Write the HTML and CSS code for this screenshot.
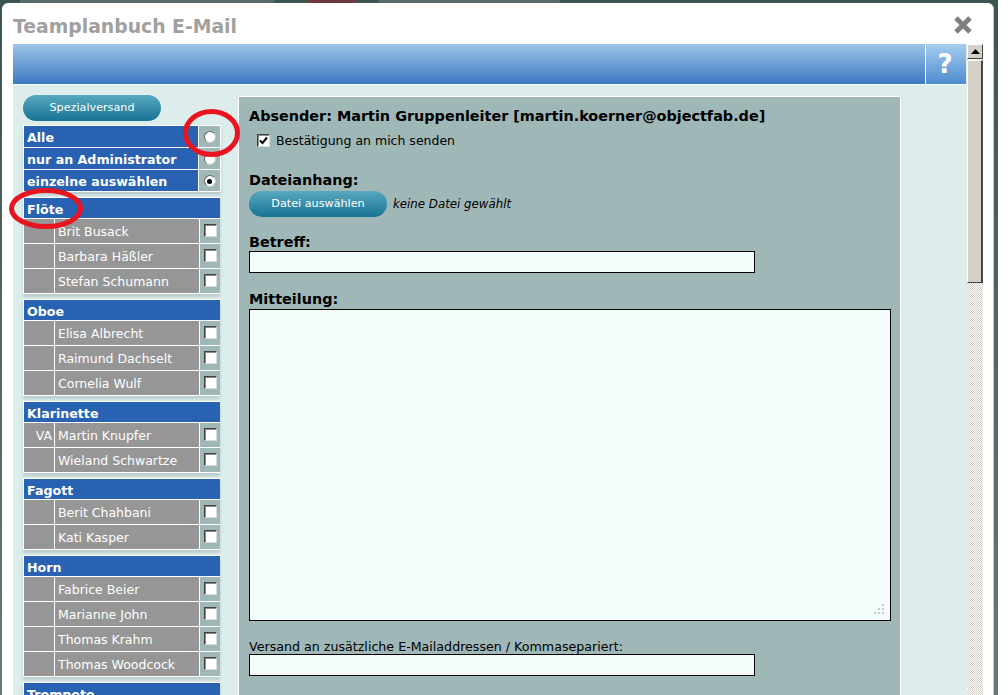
FILE: index.html
```html
<!DOCTYPE html>
<html lang="de">
<head>
<meta charset="utf-8">
<title>Teamplanbuch E-Mail</title>
<link rel="stylesheet" href="styles.css">
</head>
<body>
<div class="page">
  <div class="modal">
    <div class="titlebar">
      <h1 class="title">Teamplanbuch E-Mail</h1>
      <svg class="close" width="20" height="18" viewBox="0 0 20 18"><path d="M3 2 L17 16 M17 2 L3 16" stroke="#808080" stroke-width="5" fill="none"/></svg>
    </div>
    <div class="frame">
      <div class="viewport">
        <div class="band"><div class="help">?</div></div>
        <div class="content">
          <div class="side">
            <div class="btn side-btn">Spezialversand</div>
            <div class="group options">
              <div class="opt"><div class="opt-label">Alle</div><div class="opt-ctl"><span class="radio"></span></div></div>
              <div class="opt"><div class="opt-label">nur an Administrator</div><div class="opt-ctl"><span class="radio"></span></div></div>
              <div class="opt"><div class="opt-label">einzelne auswählen</div><div class="opt-ctl"><span class="radio on"></span></div></div>
            </div>
            <div class="group">
              <div class="ghead">Flöte</div>
              <div class="row"><div class="tag"></div><div class="name">Brit Busack</div><div class="ctl"><span class="cb"></span></div></div>
              <div class="row"><div class="tag"></div><div class="name">Barbara Häßler</div><div class="ctl"><span class="cb"></span></div></div>
              <div class="row"><div class="tag"></div><div class="name">Stefan Schumann</div><div class="ctl"><span class="cb"></span></div></div>
            </div>
            <div class="group">
              <div class="ghead">Oboe</div>
              <div class="row"><div class="tag"></div><div class="name">Elisa Albrecht</div><div class="ctl"><span class="cb"></span></div></div>
              <div class="row"><div class="tag"></div><div class="name">Raimund Dachselt</div><div class="ctl"><span class="cb"></span></div></div>
              <div class="row"><div class="tag"></div><div class="name">Cornelia Wulf</div><div class="ctl"><span class="cb"></span></div></div>
            </div>
            <div class="group">
              <div class="ghead">Klarinette</div>
              <div class="row"><div class="tag">VA</div><div class="name">Martin Knupfer</div><div class="ctl"><span class="cb"></span></div></div>
              <div class="row"><div class="tag"></div><div class="name">Wieland Schwartze</div><div class="ctl"><span class="cb"></span></div></div>
            </div>
            <div class="group">
              <div class="ghead">Fagott</div>
              <div class="row"><div class="tag"></div><div class="name">Berit Chahbani</div><div class="ctl"><span class="cb"></span></div></div>
              <div class="row"><div class="tag"></div><div class="name">Kati Kasper</div><div class="ctl"><span class="cb"></span></div></div>
            </div>
            <div class="group">
              <div class="ghead">Horn</div>
              <div class="row"><div class="tag"></div><div class="name">Fabrice Beier</div><div class="ctl"><span class="cb"></span></div></div>
              <div class="row"><div class="tag"></div><div class="name">Marianne John</div><div class="ctl"><span class="cb"></span></div></div>
              <div class="row"><div class="tag"></div><div class="name">Thomas Krahm</div><div class="ctl"><span class="cb"></span></div></div>
              <div class="row"><div class="tag"></div><div class="name">Thomas Woodcock</div><div class="ctl"><span class="cb"></span></div></div>
            </div>
            <div class="group">
              <div class="ghead">Trompete</div>
            </div>
          </div>
          <div class="panel">
            <div class="sender">Absender: Martin Gruppenleiter [martin.koerner@objectfab.de]</div>
            <div class="confirm"><span class="cb checked"><svg width="9" height="9" viewBox="0 0 9 9"><path d="M1 4.5 L3.5 7 L8 1.5" stroke="#000" stroke-width="2" fill="none"/></svg></span><span>Bestätigung an mich senden</span></div>
            <div class="label label-file">Dateianhang:</div>
            <div class="file"><div class="btn file-btn">Datei auswählen</div><em class="nofile">keine Datei gewählt</em></div>
            <div class="label label-subject">Betreff:</div>
            <div class="input"></div>
            <div class="label label-msg">Mitteilung:</div>
            <div class="textarea"><svg class="grip" width="11" height="11" viewBox="0 0 11 11"><path d="M8 0h2v2H8zM4 4h2v2H4zM8 4h2v2H8zM0 8h2v2H0zM4 8h2v2H4zM8 8h2v2H8z" fill="#c4cccc"/></svg></div>
            <div class="extra">Versand an zusätzliche E-Mailaddressen / Kommasepariert:</div>
            <div class="input"></div>
          </div>
        </div>
      </div>
      <div class="scrollbar">
        <div class="arrow"><svg width="9" height="5" viewBox="0 0 9 5"><path d="M4.5 0 L9 5 H0 Z" fill="#000"/></svg></div>
        <div class="thumb"></div>
        <div class="track"></div>
      </div>
    </div>
  </div>
</div>
<svg class="marks" width="260" height="240" viewBox="0 0 260 240">
  <ellipse cx="211.5" cy="133" rx="26" ry="21.5" fill="none" stroke="#e8141f" stroke-width="5"/>
  <ellipse cx="46" cy="208.5" rx="34.5" ry="18" fill="none" stroke="#e8141f" stroke-width="5"/>
</svg>
</body>
</html>
```
FILE: styles.css
```css
* { box-sizing: border-box; }
html, body { margin: 0; height: 695px; overflow: hidden; background: #fff; }
body { font-family: "DejaVu Sans", Verdana, sans-serif; font-size: 12.5px; position: relative; }
.page {
  width: 998px; height: 695px; padding: 3px 4px 0 2px; overflow: hidden;
  background:
    linear-gradient(90deg, transparent 20px, #566968 20px, #566968 275px, transparent 275px, transparent 308px, #6e3a40 308px, #6e3a40 356px, transparent 356px, transparent 378px, #566968 378px, #566968 560px, transparent 560px) 0 0 / 100% 3px no-repeat,
    linear-gradient(#3d5352, #6a7776);
}
.modal { height: 692px; background: #fff; border-radius: 6px 6px 0 0; padding-left: 11px; border-right: 1px solid #c8cccc; overflow: hidden; }
.titlebar { height: 41px; display: flex; justify-content: space-between; align-items: flex-start; padding: 13px 20px 0 0; }
.title { margin: 0; font-size: 18.8px; line-height: 22px; font-weight: bold; color: #a0a0a0; }
.frame { display: flex; height: 651px; }
.viewport { width: 954px; flex: none; overflow: hidden; background: #dcedec; }
.band { height: 40px; margin: 0 1px 1px 0; display: flex; justify-content: flex-end; background: linear-gradient(#9cc5e8, #3a78c2); box-shadow: 0 1px 0 #fff; }
.help { width: 41px; border-left: 1px solid #fff; background: linear-gradient(#a6cdee, #4d8ccf); color: #fff; font-size: 26px; font-weight: bold; line-height: 40px; text-align: center; padding-right: 2px; }
.content { display: flex; align-items: flex-start; padding: 10px 0 0 10px; }
.side { width: 198px; flex: none; }
.btn { border-radius: 13px; height: 26px; line-height: 25px; text-align: center; color: #fff; font-size: 11.2px; background: linear-gradient(#58a8bf, #177394); }
.side-btn { width: 138px; margin-bottom: 4px; }
.group { border: solid #fff; border-width: 1px 0 0 1px; margin-bottom: 5px; width: 197px; box-shadow: 0 3px 3px #b9cccc; background: #fff; }
.options { border-right-width: 1px; width: 198px; }
.opt { display: flex; height: 22px; border-bottom: 1px solid #fff; }
.opt-label { flex: 1; background: #2962b3; color: #fff; font-weight: bold; font-size: 12.65px; line-height: 23px; padding-left: 3px; overflow: hidden; }
.opt-ctl { width: 21px; margin-left: 1px; background: #9fb7b7; display: flex; align-items: center; justify-content: center; }
.radio { width: 12px; height: 12px; border-radius: 50%; background: #fff; border: 1px solid; border-color: #666 #c8c8c8 #c8c8c8 #666; display: flex; align-items: center; justify-content: center; margin-top: 1px; }
.radio.on::after { content: ""; width: 5px; height: 5px; border-radius: 50%; background: #000; }
.ghead { height: 21px; background: #2962b3; color: #fff; font-weight: bold; font-size: 12.65px; line-height: 20px; padding: 2px 0 0 3px; border-bottom: 1px solid #fff; overflow: hidden; }
.row { display: flex; height: 25px; border-bottom: 1px solid #fff; }
.tag { width: 30px; background: #969696; color: #fff; text-align: right; line-height: 25px; padding-right: 2px; }
.name { flex: 1; margin-left: 1px; background: #969696; color: #fff; line-height: 25px; padding-left: 3px; }
.ctl { width: 20px; margin-left: 1px; background: #9fb7b7; display: flex; align-items: center; justify-content: center; padding-bottom: 2px; }
.cb { width: 13px; height: 13px; background: #fff; border: 1px solid; border-color: #444 #dcdcdc #dcdcdc #444; box-shadow: inset 1px 1px 0 #8a8a8a; display: inline-flex; align-items: center; justify-content: center; flex: none; }
.panel { width: 663px; height: 640px; margin: 1px 0 0 17px; background: #9fb7b7; border: 1px solid #fff; padding: 10px 0 0 10px; color: #000; }
.sender { font-size: 14.4px; font-weight: bold; line-height: 18px; }
.confirm { display: flex; align-items: center; gap: 6px; height: 18px; margin: 6px 0 0 8px; }
.label { font-size: 14.4px; font-weight: bold; line-height: 18px; }
.label-file { margin-top: 22px; }
.file { display: flex; align-items: center; height: 26px; margin-top: 2px; }
.file-btn { width: 138px; }
.nofile { font-size: 11.8px; margin-left: 6px; }
.label-subject { margin-top: 16px; }
.input { width: 506px; height: 22px; border: 1px solid #000; background: #f3fcfb; }
.label-msg { margin-top: 17px; }
.textarea { width: 642px; height: 312px; border: 1px solid #000; background: #f3fcfb; margin-top: 1px; display: flex; align-items: flex-end; justify-content: flex-end; padding: 0 5px 5px 0; }
.extra { font-size: 12.65px; line-height: 15px; margin-top: 18px; }
.scrollbar { width: 16px; flex: none; height: 651px; display: flex; flex-direction: column; background: repeating-conic-gradient(#d4d0c8 0 25%, #fff 0 50%) 0 0 / 2px 2px; }
.arrow { height: 15px; background: #d4d0c8; border: 1px solid; border-color: #fff #444 #444 #fff; display: flex; align-items: center; justify-content: center; }
.thumb { height: 223px; background: #d4d0c8; border: 1px solid; border-color: #fff #444 #444 #fff; border-right-width: 2px; margin-top: 1px; }
.track { flex: 1; }
.marks { position: absolute; left: 0; top: 0; pointer-events: none; }
```
